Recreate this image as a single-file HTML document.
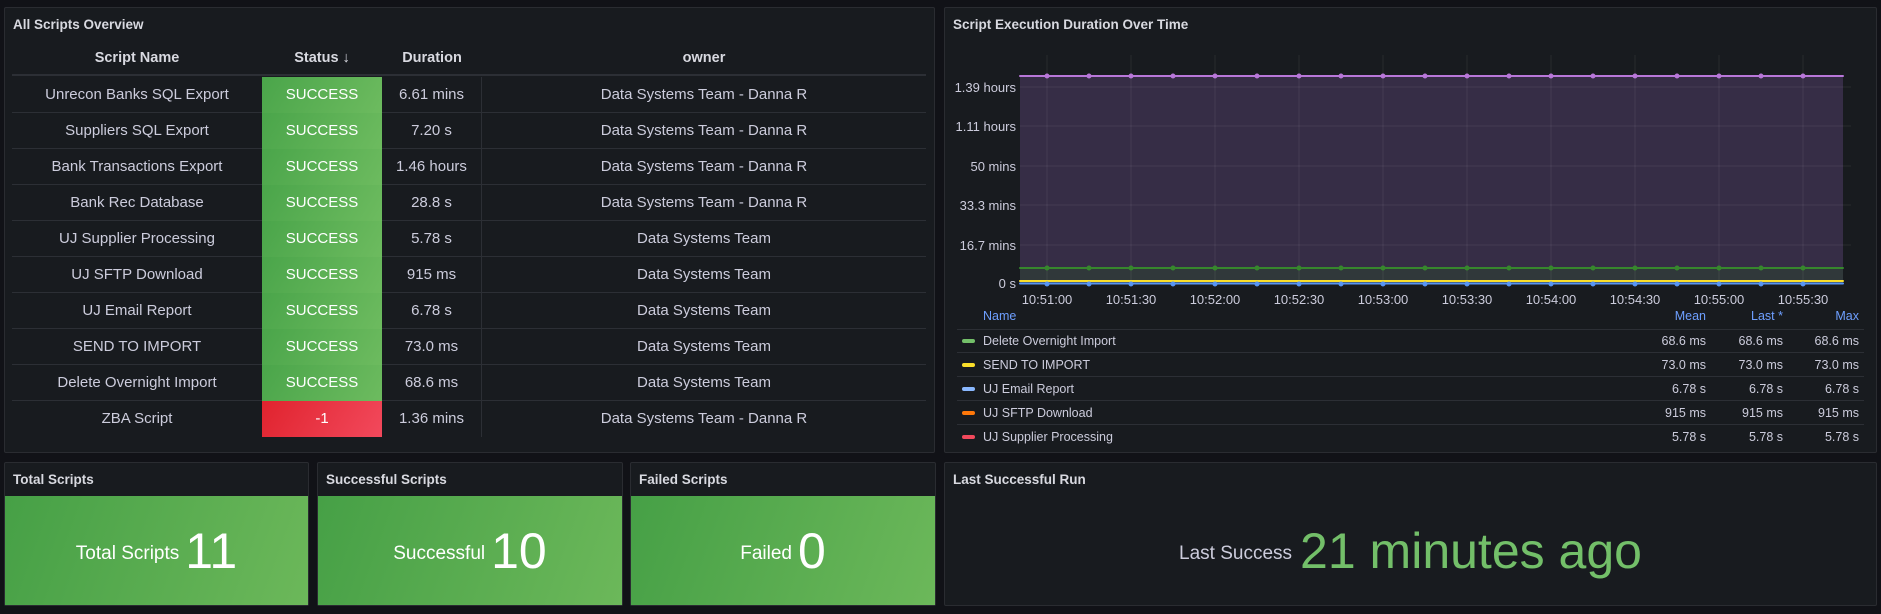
<!DOCTYPE html>
<html><head><meta charset="utf-8"><style>
*{margin:0;padding:0;box-sizing:border-box}
body{width:1881px;height:614px;background:#111217;font-family:"Liberation Sans",sans-serif;color:#ccccdc;position:relative;overflow:hidden}
.p{position:absolute;background:#181b1f;border:1px solid #2a2c31;border-radius:2px}
.t{position:absolute;left:8px;top:9px;font-size:13.5px;font-weight:bold;color:#d8d9e0}
.row{position:absolute;left:12px;width:914px;height:36px;border-bottom:1px solid #2c2f35;font-size:15px}
.row div{position:absolute;top:0;height:36px;line-height:36px;text-align:center}
.c1{left:0;width:250px}.c2{left:250px;width:120px;color:#fff}.c3{left:370px;width:100px;border-right:1px solid #2c2f35}.c4{left:470px;width:444px}
.ok{background:linear-gradient(120deg,#4aa54a,#6dbb5f)}
.bad{background:linear-gradient(120deg,#e0232e,#f2495c)}
.g{position:absolute;left:0;right:0;top:33px;bottom:0;background:linear-gradient(110deg,#46a046,#6cb85a);display:flex;align-items:center;justify-content:center;color:#fff}
.g span.l{font-size:19px;margin-right:6px;margin-top:6px}
.g span.n{font-size:50px}
.lg{position:absolute;left:957px;width:907px;height:24px;border-bottom:1px solid #2c2f35;font-size:12.5px;line-height:24px}
.lg i{position:absolute;left:5px;top:10px;width:13px;height:4px;border-radius:2px}
.lg b{font-weight:normal;position:absolute;left:26px}
.lg span{position:absolute;text-align:right;width:80px}
</style></head><body>
<div class="p" style="left:4px;top:7px;width:931px;height:446px"><div class="t">All Scripts Overview</div></div>
<div style="position:absolute;left:12px;top:50px;width:914px;height:26px;border-bottom:2px solid #2c2f35;font-size:14.5px;font-weight:bold;color:#d8d9e0">
<div style="position:absolute;left:0;width:250px;text-align:center">Script Name</div>
<div style="position:absolute;left:250px;width:120px;text-align:center">Status ↓</div>
<div style="position:absolute;left:370px;width:100px;text-align:center">Duration</div>
<div style="position:absolute;left:470px;width:444px;text-align:center">owner</div></div>
<div class="row" style="top:77px"><div class="c1">Unrecon Banks SQL Export</div><div class="c2 ok">SUCCESS</div><div class="c3">6.61 mins</div><div class="c4">Data Systems Team - Danna R</div></div>
<div class="row" style="top:113px"><div class="c1">Suppliers SQL Export</div><div class="c2 ok">SUCCESS</div><div class="c3">7.20 s</div><div class="c4">Data Systems Team - Danna R</div></div>
<div class="row" style="top:149px"><div class="c1">Bank Transactions Export</div><div class="c2 ok">SUCCESS</div><div class="c3">1.46 hours</div><div class="c4">Data Systems Team - Danna R</div></div>
<div class="row" style="top:185px"><div class="c1">Bank Rec Database</div><div class="c2 ok">SUCCESS</div><div class="c3">28.8 s</div><div class="c4">Data Systems Team - Danna R</div></div>
<div class="row" style="top:221px"><div class="c1">UJ Supplier Processing</div><div class="c2 ok">SUCCESS</div><div class="c3">5.78 s</div><div class="c4">Data Systems Team</div></div>
<div class="row" style="top:257px"><div class="c1">UJ SFTP Download</div><div class="c2 ok">SUCCESS</div><div class="c3">915 ms</div><div class="c4">Data Systems Team</div></div>
<div class="row" style="top:293px"><div class="c1">UJ Email Report</div><div class="c2 ok">SUCCESS</div><div class="c3">6.78 s</div><div class="c4">Data Systems Team</div></div>
<div class="row" style="top:329px"><div class="c1">SEND TO IMPORT</div><div class="c2 ok">SUCCESS</div><div class="c3">73.0 ms</div><div class="c4">Data Systems Team</div></div>
<div class="row" style="top:365px"><div class="c1">Delete Overnight Import</div><div class="c2 ok">SUCCESS</div><div class="c3">68.6 ms</div><div class="c4">Data Systems Team</div></div>
<div class="row" style="top:401px;border-bottom:none"><div class="c1">ZBA Script</div><div class="c2 bad">-1</div><div class="c3">1.36 mins</div><div class="c4">Data Systems Team - Danna R</div></div>

<div class="p" style="left:944px;top:7px;width:933px;height:446px"><div class="t">Script Execution Duration Over Time</div></div>
<svg style="position:absolute;left:0;top:0" width="1881" height="320" font-family="Liberation Sans" font-size="13" fill="#ccccdc">
<rect x="1020" y="76" width="823" height="207" fill="#362d46"/>
<rect x="1020" y="268" width="823" height="15" fill="#30383a"/>
<g stroke="rgba(255,255,255,0.07)" stroke-width="1">
<path d="M1047 55V283M1131 55V283M1215 55V283M1299 55V283M1383 55V283M1467 55V283M1551 55V283M1635 55V283M1719 55V283M1803 55V283"/>
<path d="M1020 87H1851M1020 126H1851M1020 166H1851M1020 205H1851M1020 245H1851"/>
</g>
<g stroke-linecap="round">
<line x1="1020" y1="76" x2="1843" y2="76" stroke="#b877d9" stroke-width="2"/>
<line x1="1047" y1="76" x2="1843" y2="76" stroke="#b877d9" stroke-width="5" stroke-dasharray="0 42"/>
<line x1="1020" y1="268" x2="1843" y2="268" stroke="#37872d" stroke-width="2"/>
<line x1="1047" y1="268" x2="1843" y2="268" stroke="#37872d" stroke-width="5" stroke-dasharray="0 42"/>
<line x1="1020" y1="281" x2="1843" y2="281" stroke="#fade2a" stroke-width="2"/>
<line x1="1020" y1="283.5" x2="1843" y2="283.5" stroke="#5794f2" stroke-width="2"/>
<line x1="1047" y1="284" x2="1843" y2="284" stroke="#5794f2" stroke-width="5" stroke-dasharray="0 42"/>
</g>
<g text-anchor="end">
<text x="1016" y="92">1.39 hours</text><text x="1016" y="131">1.11 hours</text><text x="1016" y="171">50 mins</text><text x="1016" y="210">33.3 mins</text><text x="1016" y="250">16.7 mins</text><text x="1016" y="288">0 s</text>
</g>
<g text-anchor="middle">
<text x="1047" y="304">10:51:00</text><text x="1131" y="304">10:51:30</text><text x="1215" y="304">10:52:00</text><text x="1299" y="304">10:52:30</text><text x="1383" y="304">10:53:00</text><text x="1467" y="304">10:53:30</text><text x="1551" y="304">10:54:00</text><text x="1635" y="304">10:54:30</text><text x="1719" y="304">10:55:00</text><text x="1803" y="304">10:55:30</text>
</g>
</svg>
<div style="position:absolute;left:957px;top:309px;width:907px;height:21px;border-bottom:1px solid #2c2f35;font-size:12.5px;color:#6e9fff">
<span style="position:absolute;left:26px">Name</span><span style="position:absolute;right:158px">Mean</span><span style="position:absolute;right:81px">Last *</span><span style="position:absolute;right:5px">Max</span></div>
<div class="lg" style="top:329px"><i style="background:#73bf69"></i><b>Delete Overnight Import</b><span style="left:669px">68.6 ms</span><span style="left:746px">68.6 ms</span><span style="left:822px">68.6 ms</span></div>
<div class="lg" style="top:353px"><i style="background:#fade2a"></i><b>SEND TO IMPORT</b><span style="left:669px">73.0 ms</span><span style="left:746px">73.0 ms</span><span style="left:822px">73.0 ms</span></div>
<div class="lg" style="top:377px"><i style="background:#8ab8ff"></i><b>UJ Email Report</b><span style="left:669px">6.78 s</span><span style="left:746px">6.78 s</span><span style="left:822px">6.78 s</span></div>
<div class="lg" style="top:401px"><i style="background:#ff780a"></i><b>UJ SFTP Download</b><span style="left:669px">915 ms</span><span style="left:746px">915 ms</span><span style="left:822px">915 ms</span></div>
<div class="lg" style="top:425px;border-bottom:none"><i style="background:#f2495c"></i><b>UJ Supplier Processing</b><span style="left:669px">5.78 s</span><span style="left:746px">5.78 s</span><span style="left:822px">5.78 s</span></div>

<div class="p" style="left:4px;top:462px;width:305px;height:144px"><div class="t">Total Scripts</div><div class="g"><span class="l">Total Scripts</span><span class="n">11</span></div></div>
<div class="p" style="left:317px;top:462px;width:306px;height:144px"><div class="t">Successful Scripts</div><div class="g"><span class="l">Successful</span><span class="n">10</span></div></div>
<div class="p" style="left:630px;top:462px;width:306px;height:144px"><div class="t">Failed Scripts</div><div class="g"><span class="l">Failed</span><span class="n">0</span></div></div>
<div class="p" style="left:944px;top:462px;width:933px;height:144px"><div class="t">Last Successful Run</div>
<div style="position:absolute;left:0;right:0;top:33px;bottom:0;display:flex;align-items:center;justify-content:center">
<span style="font-size:19px;color:#ccccdc;margin-right:8px;margin-top:6px">Last Success</span><span style="font-size:50px;color:#73bf69">21 minutes ago</span></div></div>
</body></html>
